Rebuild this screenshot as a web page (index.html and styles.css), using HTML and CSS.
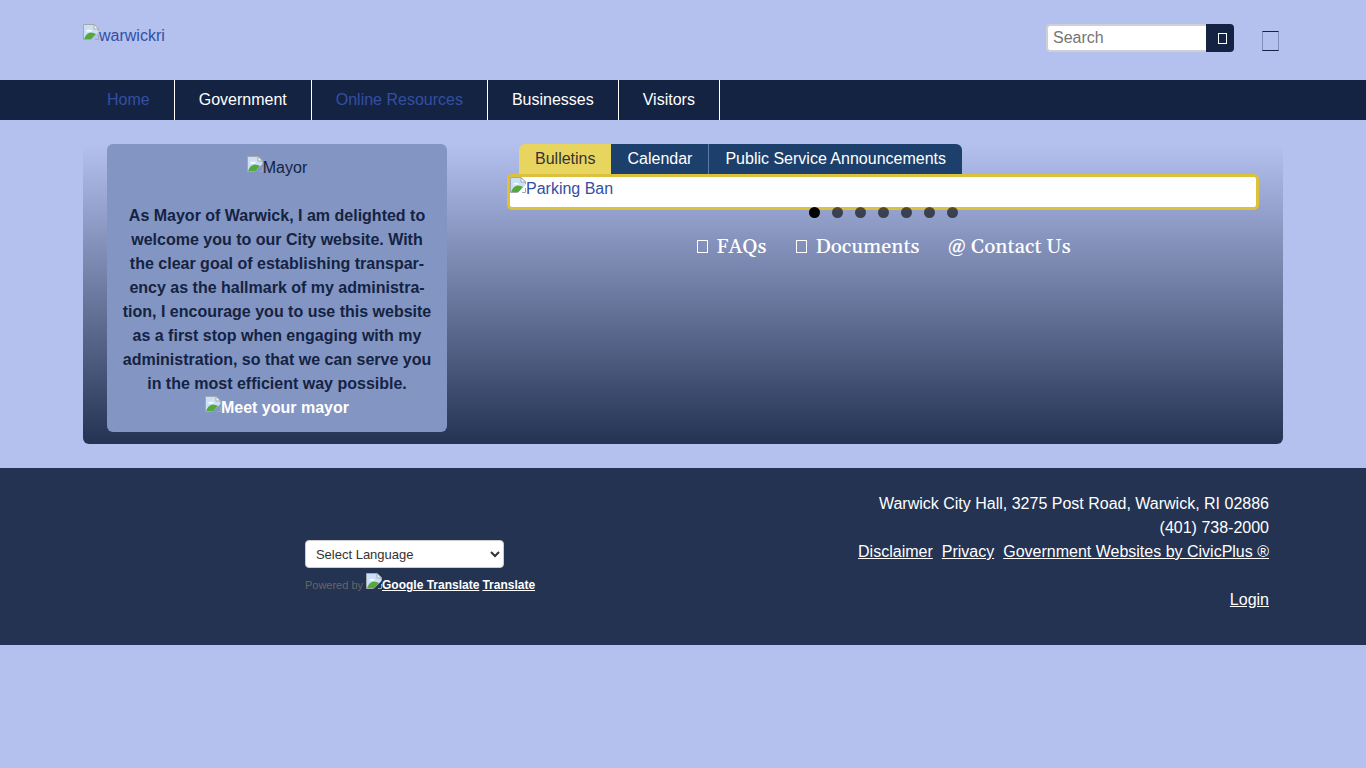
FILE: index.html
```html
<!DOCTYPE html>
<html lang="en">
<head>
<meta charset="utf-8">
<meta name="viewport" content="width=device-width, initial-scale=1">
<title>Warwick, RI</title>
<link rel="stylesheet" href="styles.css">
</head>
<body>
<svg class="defs" aria-hidden="true">
  <symbol id="missing" viewBox="0 0 16 16">
    <path d="M.5 15.500V.5H11L15.500 5V8L8 15.500Z" fill="#cbdff8"/>
    <path d="M3 7.500a2 2 0 0 1 3-1.500 2 2 0 0 1 3 1.500Z" fill="#fff"/>
    <path d="M1 15.500Q3 9 7.500 8.500Q11 8.500 13 10L8 15.500Z" fill="#55a83a"/>
    <path d="M.5 15.500V.5H11L15.500 5V7" fill="none" stroke="#a3a8ad"/>
    <path d="M11 .5V5H15.500Z" fill="#fff" stroke="#a3a8ad"/>
    <path d="M.5 15.500H7M12 15.500H15.500V11" fill="none" stroke="#a3a8ad"/>
  </symbol>
</svg>

<header class="header wrap">
  <a class="picture" href="#"><svg class="missing" aria-hidden="true"><use href="#missing"/></svg>warwickri</a>
  <div class="tools">
    <form class="search">
      <input class="search-input" type="text" placeholder="Search" aria-label="Search">
      <button class="search-button" type="button" aria-label="Search"><span class="glyph glyph-small"></span></button>
    </form>
    <a class="menu-link" href="#" aria-label="Menu"><span class="glyph glyph-large"></span></a>
  </div>
</header>

<nav class="nav">
  <ul class="nav-list wrap">
    <li><a class="muted" href="#">Home</a></li>
    <li><a href="#">Government</a></li>
    <li><a class="muted" href="#">Online Resources</a></li>
    <li><a href="#">Businesses</a></li>
    <li><a href="#">Visitors</a></li>
  </ul>
</nav>

<main class="main wrap">
  <section class="mayor">
    <div class="portrait picture"><svg class="missing" aria-hidden="true"><use href="#missing"/></svg>Mayor</div>
    <p class="welcome">As Mayor of Warwick, I am delighted to welcome you to our City website. With the clear goal of establishing transpar&shy;ency as the hallmark of my administra&shy;tion, I encourage you to use this website as a first stop when engaging with my administration, so that we can serve you in the most efficient way possible.</p>
    <a class="picture meet" href="#"><svg class="missing" aria-hidden="true"><use href="#missing"/></svg>Meet your mayor</a>
  </section>
  <section class="news">
    <div class="tabs">
      <button class="tab active" type="button">Bulletins</button>
      <button class="tab" type="button">Calendar</button>
      <button class="tab" type="button">Public Service Announcements</button>
    </div>
    <div class="slider">
      <a class="picture" href="#"><svg class="missing" aria-hidden="true"><use href="#missing"/></svg>Parking Ban</a>
      <div class="dots">
        <button class="dot current" type="button" aria-label="Slide 1"></button>
        <button class="dot" type="button" aria-label="Slide 2"></button>
        <button class="dot" type="button" aria-label="Slide 3"></button>
        <button class="dot" type="button" aria-label="Slide 4"></button>
        <button class="dot" type="button" aria-label="Slide 5"></button>
        <button class="dot" type="button" aria-label="Slide 6"></button>
        <button class="dot" type="button" aria-label="Slide 7"></button>
      </div>
    </div>
    <div class="quick">
      <a href="#"><span class="glyph glyph-medium"></span>FAQs</a>
      <a href="#"><span class="glyph glyph-medium"></span>Documents</a>
      <a href="#">@ Contact Us</a>
    </div>
  </section>
</main>

<footer class="footer">
  <div class="footer-inner wrap">
    <div class="translate">
      <select class="language" aria-label="Select Language"><option>Select Language</option></select>
      <div class="powered">
        <span>Powered by</span>
        <a href="#"><svg class="missing" aria-hidden="true"><use href="#missing"/></svg><u>Google Translate</u></a>
        <a href="#"><u>Translate</u></a>
      </div>
    </div>
    <div class="contact">
      <p>Warwick City Hall, 3275 Post Road, Warwick, RI 02886</p>
      <p>(401) 738-2000</p>
      <p class="legal"><a href="#">Disclaimer</a><a href="#">Privacy</a><a href="#">Government Websites by CivicPlus ®</a></p>
      <p class="login"><a href="#">Login</a></p>
    </div>
  </div>
</footer>
</body>
</html>
```
FILE: styles.css
```css
* { box-sizing: border-box; }
body {
  margin: 0;
  background: #b4c1ef;
  color: #152342;
  font: 16px/24px "Liberation Sans", Arial, sans-serif;
}
p, ul { margin: 0; padding: 0; }
button, input, select { font: inherit; margin: 0; }
button { border: 0; cursor: pointer; }
a { color: #324fa4; text-decoration: none; }
.defs { display: none; }
.wrap { width: calc(100% - 32px); max-width: 1200px; margin: 0 auto; }
.missing { width: 16px; height: 16px; flex: none; }
.picture { display: flex; align-items: flex-start; }
.glyph { display: inline-block; border: 1px solid currentColor; }
.glyph-small { width: 9px; height: 11px; }
.glyph-medium { width: 11px; height: 13px; margin: 0 8px 0 2px; }
.glyph-large { width: 17px; height: 20px; border-color: #152342 #7f8cba; }

.header { display: flex; justify-content: space-between; align-items: flex-start; padding: 24px 0; min-height: 80px; }
.tools { display: flex; gap: 28px; padding-right: 4px; }
.search { display: flex; }
.search-input {
  width: 160px; height: 28px; padding: 0 5px;
  border: 2px solid #cfcfd6; border-right: 0; border-radius: 4px 0 0 4px;
  background: #fff;
}
.search-input::placeholder { color: #757575; }
.search-button {
  width: 28px; height: 28px; padding: 0 0 0 4px;
  display: flex; align-items: center; justify-content: center;
  background: #152342; color: #fff; border-radius: 0 4px 4px 0;
}
.menu-link { display: flex; padding-top: 7px; }

.nav { background: #152342; }
.nav-list { display: flex; list-style: none; }
.nav a { display: block; padding: 8px 24px; color: #fff; border-right: 1px solid #fff; }
.nav a.muted { color: #324fa4; }

.main {
  display: flex; gap: 60px;
  margin-top: 24px; margin-bottom: 24px; padding: 0 24px 12px;
  background: linear-gradient(#b4c1ef, #243352);
  border-radius: 6px;
}
.mayor {
  width: 340px; flex: none; padding: 12px;
  background: #8295c3; border-radius: 6px; text-align: center;
}
.portrait { height: 48px; justify-content: center; }
.welcome { font-weight: bold; }
.meet { justify-content: center; color: #fff; font-weight: bold; }
.news { flex: 1; min-width: 0; }
.tabs { display: flex; padding-left: 12px; }
.tab { height: 30px; padding: 0 16px; background: #1d3f6c; color: #fff; }
.tab + .tab + .tab { border-left: 1px solid #5c7aa8; border-radius: 0 6px 0 0; }
.tab.active { background: #e8d55f; color: #333; border-radius: 6px 0 0 0; }
.slider { position: relative; height: 36px; background: #fff; border: 3px solid #dcc13c; border-radius: 5px; }
.dots { position: absolute; left: 0; right: 0; bottom: -11px; display: flex; justify-content: center; gap: 12px; }
.dot { width: 11px; height: 11px; padding: 0; border-radius: 50%; background: #000; opacity: .6; }
.dot.current { opacity: 1; }
.quick { display: flex; justify-content: center; gap: 28px; padding-top: 25px; }
.quick a { color: #fff; font: 500 20px/24px Georgia, Gelasio, "Liberation Serif", serif; }

.footer { background: #243352; color: #fff; }
.footer-inner { display: grid; grid-template-columns: 1fr 1fr; padding: 24px 14px 33px 0; }
.footer a { color: #fff; }
.translate { justify-self: center; padding: 48px 0 0 81px; }
.language {
  display: block; width: 199px; height: 28px; padding: 0 6px;
  border: 1px solid #ccc; border-radius: 4px; background: #fff;
  color: #333; font-size: 13px;
}
.powered { display: flex; align-items: center; gap: 3px; padding-top: 5px; color: #666; font-size: 11px; }
.powered a { display: flex; font-size: 12px; font-weight: bold; }
.contact { text-align: right; }
.legal { display: flex; justify-content: flex-end; gap: 9px; }
.contact a { text-decoration: underline; }
.login { padding-top: 24px; }
```
